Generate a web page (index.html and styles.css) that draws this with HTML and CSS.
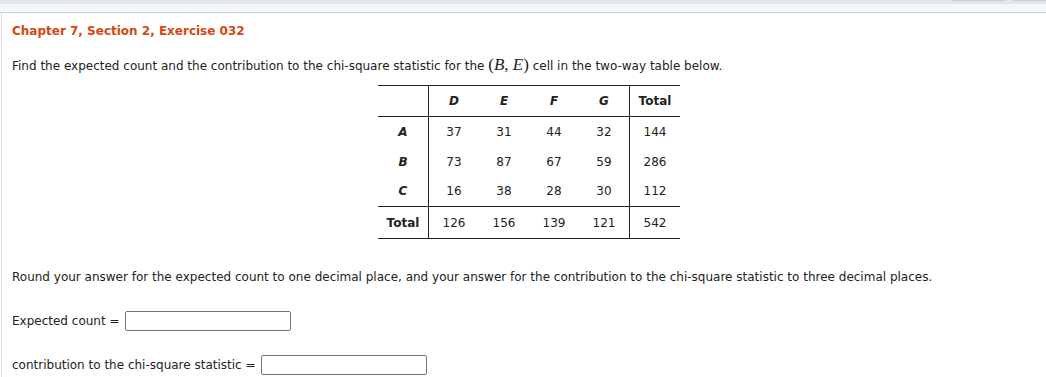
FILE: index.html
```html
<!DOCTYPE html>
<html>
<head>
<meta charset="utf-8">
<link rel="stylesheet" href="styles.css">
</head>
<body>
<div class="topbar"><span class="tab tab1"></span><span class="tab tab2"></span></div>
<div class="band"></div>
<div class="panel">
  <h1 class="title">Chapter 7, Section 2, Exercise 032</h1>
  <p class="q">Find the expected count and the contribution to the chi-square statistic for the <span class="math">(<i>B</i>, <i>E</i>)</span> cell in the two-way table below.</p>
  <div class="tablewrap">
    <table class="tw">
      <thead>
        <tr><th class="rh"></th><th><i>D</i></th><th><i>E</i></th><th><i>F</i></th><th><i>G</i></th><th class="tot">Total</th></tr>
      </thead>
      <tbody>
        <tr><th class="rh"><i>A</i></th><td>37</td><td>31</td><td>44</td><td>32</td><td class="tot">144</td></tr>
        <tr><th class="rh"><i>B</i></th><td>73</td><td>87</td><td>67</td><td>59</td><td class="tot">286</td></tr>
        <tr><th class="rh"><i>C</i></th><td>16</td><td>38</td><td>28</td><td>30</td><td class="tot">112</td></tr>
      </tbody>
      <tfoot>
        <tr><th class="rh">Total</th><td>126</td><td>156</td><td>139</td><td>121</td><td class="tot">542</td></tr>
      </tfoot>
    </table>
  </div>
  <p class="round">Round your answer for the expected count to one decimal place, and your answer for the contribution to the chi-square statistic to three decimal places.</p>
  <div class="ans ans1"><label>Expected count =</label><input type="text" class="box"></div>
  <div class="ans ans2"><label>contribution to the chi-square statistic =</label><input type="text" class="box"></div>
</div>
</body>
</html>
```
FILE: styles.css
```css
html, body {
  margin: 0;
  padding: 0;
  background: #ffffff;
  font-family: "DejaVu Sans", Verdana, sans-serif;
  font-size: 12px;
  color: #222222;
  overflow: hidden;
}
.topbar {
  height: 4px;
  background: #e2e6ea;
  display: flex;
  justify-content: flex-end;
  align-items: flex-start;
}
.tab {
  height: 1px;
  background: #c6cfda;
}
.tab1 { width: 54px; margin-right: 7px; }
.tab2 { width: 33px; }
.band {
  height: 8px;
  background: #f3f7fb;
  border-bottom: 1px solid #c9d3df;
}
.panel {
  margin-left: 1px;
  border-left: 1px solid #d5dce5;
  padding: 0 0 20px 10px;
}
.title {
  margin: 0;
  padding-top: 10px;
  font-size: 12px;
  font-weight: bold;
  color: #d5470f;
  line-height: 16px;
}
.q {
  margin: 18px 0 0 0;
  line-height: 16px;
}
.math {
  font-family: "Liberation Serif", "Times New Roman", serif;
  font-size: 17px;
}
.tablewrap {
  display: flex;
  padding-left: 366px;
  margin-top: 11px;
}
.tw {
  border-collapse: collapse;
  table-layout: fixed;
  width: 302px;
}
.tw th, .tw td {
  width: 50px;
  text-align: center;
  padding: 0;
  font-weight: normal;
}
.tw th { font-weight: bold; }
.tw thead tr { height: 31px; }
.tw thead th {
  border-top: 1px solid #222;
  border-bottom: 1px solid #222;
}
.tw tbody tr { height: 30px; }
.tw tfoot tr { height: 32px; }
.tw tfoot th, .tw tfoot td {
  border-top: 1px solid #222;
  border-bottom: 1px solid #222;
}
.tw .rh { border-right: 1px solid #222; }
.tw .tot { border-left: 1px solid #222; }
.round {
  margin: 30px 0 0 0;
  line-height: 16px;
}
.ans {
  display: flex;
  align-items: center;
  gap: 5px;
}
.ans1 { margin-top: 26px; }
.ans2 { margin-top: 24px; }
.box {
  width: 166px;
  height: 20px;
  box-sizing: border-box;
  border: 1px solid #767676;
  border-radius: 2px;
  padding: 0;
  margin: 0;
  background: #fff;
}
```
